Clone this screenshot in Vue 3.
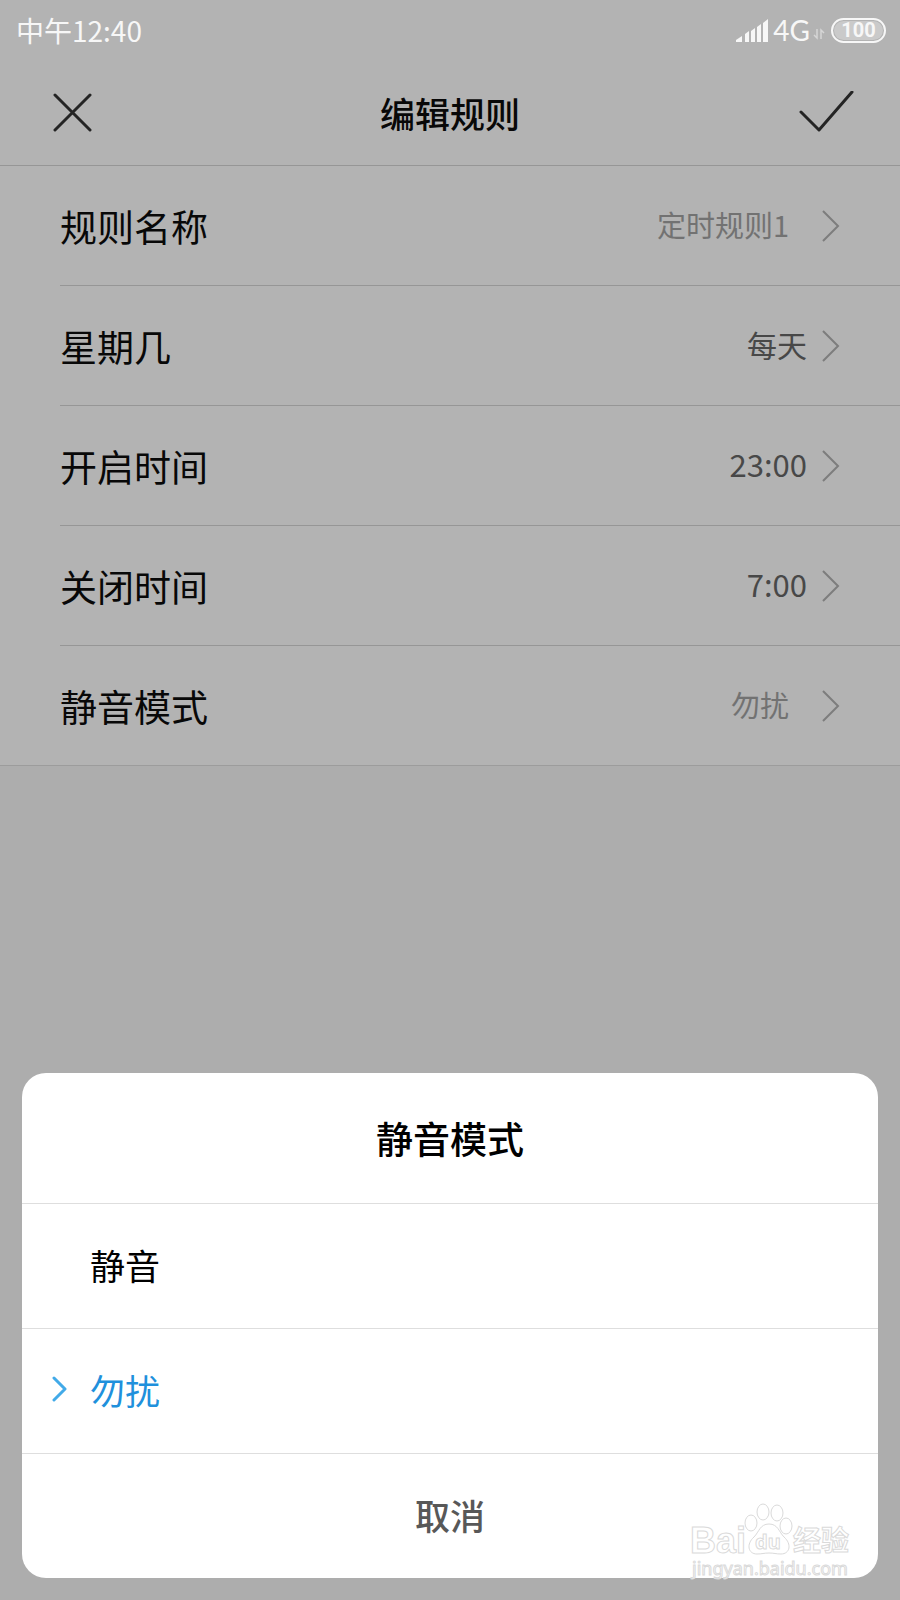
<script setup>
import { ref } from 'vue'

const rows = [
  { label: '规则名称', value: '定时规则1', muted: true },
  { label: '星期几', value: '每天' },
  { label: '开启时间', value: '23:00', time: true },
  { label: '关闭时间', value: '7:00', time: true },
  { label: '静音模式', value: '勿扰', muted: true }
]
const modes = ['静音', '勿扰']
const mode = ref('勿扰')
</script>

<template>
  <div class="screen">
    <div class="status">
      <span class="clock">中午12:40</span>
      <div class="indicators">
        <svg class="signal" width="34" height="24" viewBox="0 0 34 24" aria-hidden="true">
          <path d="M1 24v-2l6-4v6zM10 24v-8l4-3v11zM16 24V13l4-3v14zM22 24V9l4-3v18zM28 24V5l5-4v23z" fill="#f7f7f7" />
        </svg>
        <span class="network">4G</span>
        <svg class="data" width="12" height="12" viewBox="0 0 12 12" fill="none" stroke="#d6d6d6" stroke-width="1.5" aria-hidden="true">
          <path d="M4 1v9L1 7M8 11V2l3 3" />
        </svg>
        <span class="battery"><span class="level">100</span></span>
      </div>
    </div>

    <header class="bar">
      <button class="icon-button" type="button" aria-label="关闭">
        <svg width="40" height="40" viewBox="0 0 40 40" fill="none" stroke="#242424" stroke-width="3" stroke-linecap="round">
          <path d="M2 2l35 35M37 2L2 37" />
        </svg>
      </button>
      <h1>编辑规则</h1>
      <button class="icon-button" type="button" aria-label="确定">
        <svg width="56" height="44" viewBox="0 0 56 44" fill="none" stroke="#242424" stroke-width="3" stroke-linecap="round" stroke-linejoin="round">
          <path d="M2 21l18 18L53 1" />
        </svg>
      </button>
    </header>

    <main class="list">
      <button v-for="row in rows" :key="row.label" class="row" type="button">
        <span class="label">{{ row.label }}</span>
        <span class="value" :class="{ muted: row.muted, time: row.time }">{{ row.value }}</span>
        <svg width="18" height="32" viewBox="0 0 18 32" fill="none" stroke="#7d7d7d" stroke-width="2" aria-hidden="true">
          <path d="M1 1l15 15L1 31" />
        </svg>
      </button>
    </main>

    <section class="sheet" role="dialog" aria-labelledby="sheet-title">
      <h2 id="sheet-title">静音模式</h2>
      <label v-for="item in modes" :key="item" class="option" :class="{ selected: mode === item }">
        <input v-model="mode" type="radio" name="mode" :value="item" />
        <span class="mark">
          <svg v-if="mode === item" width="16" height="26" viewBox="0 0 16 26" fill="none" stroke="#42aae8" stroke-width="3" stroke-linecap="round" stroke-linejoin="round" aria-hidden="true">
            <path d="M2 2l11 11L2 24" />
          </svg>
        </span>
        <span>{{ item }}</span>
      </label>
      <button class="cancel" type="button">取消</button>
    </section>

    <svg class="watermark" width="166" height="84" viewBox="0 0 166 84" fill="#fff" stroke="#dadada" aria-hidden="true">
      <text class="brand" x="0" y="53">Bai</text>
      <ellipse cx="61" cy="23" rx="6" ry="8" />
      <ellipse cx="73" cy="12" rx="6" ry="8" />
      <ellipse cx="87" cy="13" rx="6" ry="8" />
      <ellipse cx="96" cy="26" rx="6" ry="8" />
      <path d="M79 24c9 0 10 8 15 13 8 7 6 17-3 17-5 0-7-1-12-1s-7 1-12 1c-9 0-11-10-3-17 5-5 6-13 15-13z" />
      <text class="paw-text" x="65" y="49">du</text>
      <text class="brand-cn" x="103" y="51">经验</text>
      <text class="site" x="2" y="75">jingyan.baidu.com</text>
    </svg>
  </div>
</template>

<style>
body {
  background: #adadad;
}
</style>

<style scoped>
.screen {
  position: relative;
  display: flex;
  flex-direction: column;
  box-sizing: border-box;
  min-height: 100vh;
  padding-bottom: 22px;
  background: #adadad;
  color: #080808;
  font-family: "Noto Sans CJK SC", sans-serif;
}
button {
  margin: 0;
  padding: 0;
  border: 0;
  background: none;
  color: inherit;
  font: inherit;
  cursor: pointer;
}
svg {
  display: block;
  flex: none;
}
.status {
  display: flex;
  align-items: center;
  justify-content: space-between;
  height: 60px;
  padding: 0 14px 0 16px;
  background: #b3b3b3;
  color: #f7f7f7;
  font-size: 28px;
  line-height: 40px;
}
.indicators {
  display: flex;
  align-items: center;
}
.network {
  margin-left: 4px;
  font-family: Lato, sans-serif;
}
.data {
  margin: 8px 6px 0 3px;
}
.battery {
  display: flex;
  box-sizing: border-box;
  width: 55px;
  height: 25px;
  padding: 1px;
  border: 2px solid #f7f7f7;
  border-radius: 13px;
}
.level {
  flex: 1;
  border-radius: 10px;
  background: #cacaca;
  font: bold 20px/19px Roboto, sans-serif;
  text-align: center;
}
.bar {
  display: flex;
  align-items: center;
  justify-content: space-between;
  height: 105px;
  padding: 0 36px;
  border-bottom: 1px solid #969696;
  background: #b3b3b3;
}
.icon-button {
  display: flex;
  align-items: center;
  justify-content: center;
  width: 74px;
  height: 74px;
}
h1,
h2 {
  margin: 0;
  font-weight: 500;
}
h1 {
  font-size: 35px;
  line-height: 52px;
}
.list {
  padding-left: 60px;
  border-bottom: 1px solid #9c9c9c;
  background: #b3b3b3;
}
.row {
  display: flex;
  align-items: center;
  box-sizing: border-box;
  width: 100%;
  height: 120px;
  padding-right: 60px;
  border-bottom: 1px solid #969696;
  text-align: left;
}
.row:last-child {
  height: 119px;
  border-bottom: 0;
}
.label {
  flex: 1;
  font-size: 37px;
  line-height: 56px;
}
.value {
  margin-right: 15px;
  padding-bottom: 3px;
  color: #484848;
  font-size: 30px;
  line-height: 44px;
}
.value.time {
  font-size: 31px;
}
.value.muted {
  margin-right: 33px;
  color: #727272;
  font-size: 29px;
}
.sheet {
  margin: auto 22px 0;
  border-radius: 24px;
  background: #fff;
  color: #000;
  overflow: hidden;
}
h2 {
  padding: 37px 0;
  font-size: 37px;
  line-height: 56px;
  text-align: center;
}
.option {
  position: relative;
  display: flex;
  align-items: center;
  box-sizing: border-box;
  height: 125px;
  padding: 0 30px 4px;
  border-top: 1px solid #dedede;
  font-size: 35px;
  cursor: pointer;
}
.option input {
  position: absolute;
  inset: 0;
  margin: 0;
  opacity: 0;
  cursor: pointer;
}
.mark {
  width: 38px;
}
.selected {
  color: #2090dc;
}
.cancel {
  display: block;
  width: 100%;
  height: 125px;
  padding-bottom: 3px;
  border-top: 1px solid #dedede;
  color: #585858;
  font-size: 35px;
  font-weight: 500;
}
.watermark {
  position: absolute;
  right: 44px;
  bottom: 16px;
}
.brand {
  font: bold 36px "Liberation Sans", sans-serif;
}
.paw-text {
  font: bold 20px "Noto Sans", sans-serif;
}
.brand-cn {
  font: bold 28px "Noto Sans CJK SC", sans-serif;
}
.site {
  font: 18px "Noto Sans", sans-serif;
}
</style>
